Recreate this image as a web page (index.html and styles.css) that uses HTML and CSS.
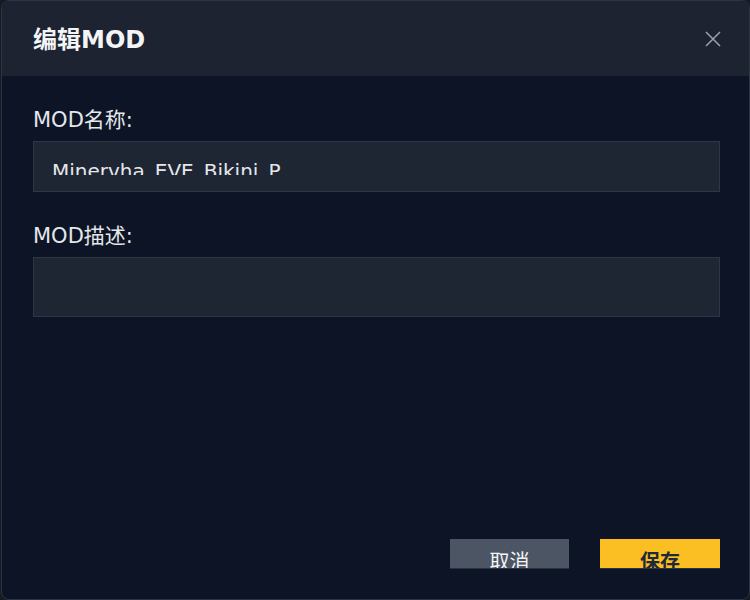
FILE: index.html
```html
<!DOCTYPE html>
<html lang="zh-CN">
<head>
<meta charset="utf-8">
<title>编辑MOD</title>
<link rel="stylesheet" href="styles.css">
</head>
<body>
  <div class="dialog">
    <div class="dialog-header">
      <h1 class="dialog-title">编辑MOD</h1>
      <button class="close-btn" aria-label="关闭">
        <svg width="16" height="16" viewBox="0 0 16 16"><path d="M1 1 L15 15 M15 1 L1 15" stroke="#9aa1ac" stroke-width="1.5" fill="none"/></svg>
      </button>
    </div>
    <div class="dialog-body">
      <label class="field-label">MOD名称:</label>
      <div class="field field-name"><div class="field-text">Minervha_EVE_Bikini_P</div></div>
      <label class="field-label second">MOD描述:</label>
      <div class="field field-desc"></div>
      <div class="dialog-footer">
        <button class="btn btn-cancel"><span class="btn-text">取消</span></button>
        <button class="btn btn-save"><span class="btn-text">保存</span></button>
      </div>
    </div>
  </div>
</body>
</html>
```

FILE: styles.css
```css
html, body {
  margin: 0;
  padding: 0;
}
body {
  background: #161b22;
  width: 750px;
  height: 600px;
  overflow: hidden;
  font-family: "DejaVu Sans", "Noto Sans CJK SC", sans-serif;
}
.dialog {
  box-sizing: border-box;
  margin-left: 1px;
  width: 749px;
  height: 600px;
  border: 1px solid #2c3544;
  border-radius: 8px;
  background: #0c1425;
  overflow: hidden;
  display: flex;
  flex-direction: column;
}
.dialog-header {
  flex: none;
  height: 75px;
  background: #1d2331;
  display: flex;
  align-items: center;
  justify-content: space-between;
  padding: 0 28px 0 31px;
}
.dialog-title {
  margin: 0;
  font-size: 24px;
  font-weight: 700;
  color: #f3f4f6;
  line-height: 32px;
  position: relative;
  top: 1px;
}
.close-btn {
  background: none;
  border: 0;
  padding: 0;
  width: 16px;
  height: 16px;
  display: flex;
}
.dialog-body {
  flex: 1;
  display: flex;
  flex-direction: column;
  padding: 30px 29px 30px 31px;
}
.field-label {
  display: block;
  font-size: 21px;
  line-height: 28px;
  color: #e5e7eb;
  margin-bottom: 7px;
}
.field-label.second {
  margin-top: 30px;
}
.field {
  box-sizing: border-box;
  background: #1e2533;
  border: 1px solid #2e3746;
}
.field-name {
  height: 51px;
  padding: 18px 18px 0;
}
.field-desc {
  height: 60px;
}
.field-text {
  height: 15px;
  overflow: hidden;
  font-size: 20px;
  line-height: 22px;
  color: #e5e7eb;
}
.dialog-footer {
  margin-top: auto;
  display: flex;
  justify-content: flex-end;
  gap: 31px;
}
.btn {
  box-sizing: border-box;
  width: 120px;
  height: 30px;
  border: 0;
  border-bottom: 1px solid #2a3140;
  padding: 12px 0 0;
  overflow: hidden;
  font-family: "Noto Sans CJK SC", sans-serif;
  font-size: 20px;
  line-height: 20px;
  text-align: center;
}
.btn-text {
  display: block;
}
.btn-cancel {
  width: 119px;
  background: #4b5563;
  color: #f3f4f6;
}
.btn-save {
  background: #fbbf24;
  color: #1f2937;
  font-weight: 700;
}
```
